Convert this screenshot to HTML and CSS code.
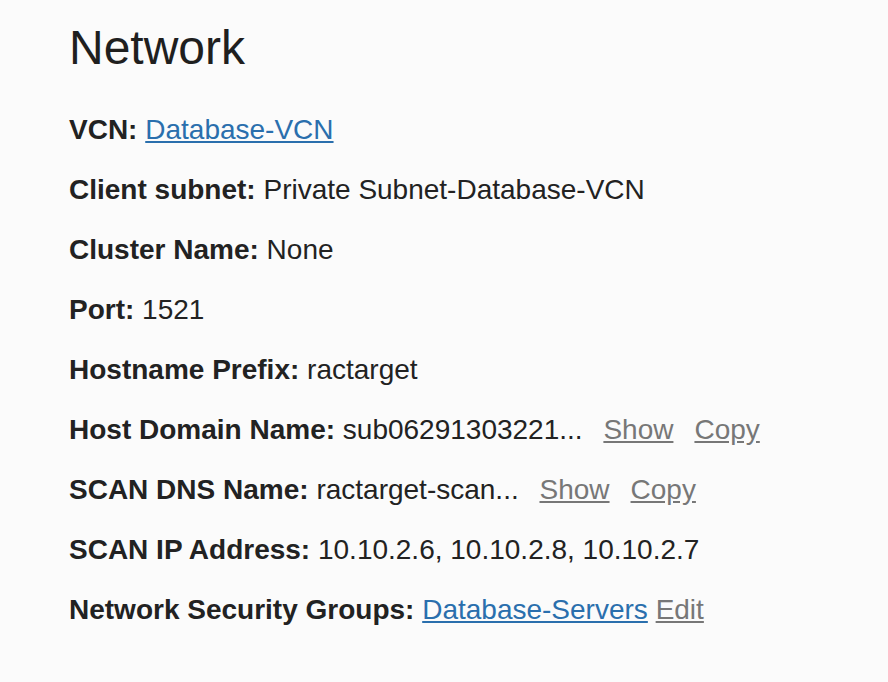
FILE: index.html
```html
<!DOCTYPE html>
<html>
<head>
<meta charset="utf-8">
<link rel="stylesheet" href="styles.css">
</head>
<body>
<div class="page">
  <h1 class="title">Network</h1>
  <ul class="props">
    <li class="row"><span class="label">VCN:</span> <a class="link" href="#">Database-VCN</a></li>
    <li class="row"><span class="label">Client subnet:</span> Private Subnet-Database-VCN</li>
    <li class="row"><span class="label">Cluster Name:</span> None</li>
    <li class="row"><span class="label">Port:</span> 1521</li>
    <li class="row"><span class="label">Hostname Prefix:</span> ractarget</li>
    <li class="row"><span class="label">Host Domain Name:</span> sub06291303221... <span class="actions"><a class="muted" href="#">Show</a><a class="muted" href="#">Copy</a></span></li>
    <li class="row"><span class="label">SCAN DNS Name:</span> ractarget-scan... <span class="actions"><a class="muted" href="#">Show</a><a class="muted" href="#">Copy</a></span></li>
    <li class="row"><span class="label">SCAN IP Address:</span> 10.10.2.6, 10.10.2.8, 10.10.2.7</li>
    <li class="row"><span class="label">Network Security Groups:</span> <a class="link" href="#">Database-Servers</a> <a class="muted" href="#">Edit</a></li>
  </ul>
</div>
</body>
</html>
```
FILE: styles.css
```css
html, body {
  margin: 0;
  padding: 0;
  background: #fbfbfb;
}
body {
  font-family: "Liberation Sans", Arial, sans-serif;
  color: #222;
}
.page {
  padding: 20px 0 0 69px;
}
.title {
  margin: 0;
  font-size: 48px;
  font-weight: normal;
  line-height: 56px;
  color: #1f1f1f;
}
.props {
  list-style: none;
  margin: 38px 0 0 0;
  padding: 0;
}
.row {
  font-size: 28px;
  line-height: 32px;
  height: 60px;
}
.label {
  font-weight: bold;
}
.link {
  color: #2a6fad;
  text-decoration: underline;
}
.muted {
  color: #777;
  text-decoration: underline;
}
.actions {
  margin-left: 13px;
  display: inline-flex;
  gap: 21px;
}
```
